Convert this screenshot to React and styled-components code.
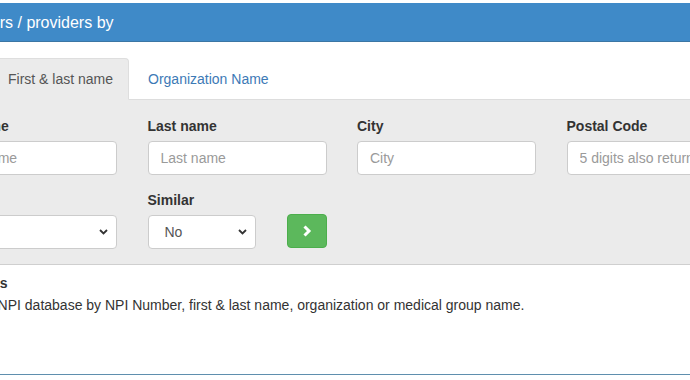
import React from "react";
import styled, { createGlobalStyle } from "styled-components";

const GlobalStyle = createGlobalStyle`
  html, body {
    margin: 0;
    padding: 0;
    background: #fff;
    overflow: hidden;
  }
  body {
    font-family: "Liberation Sans", Arial, sans-serif;
    font-size: 14px;
    color: #333;
  }
  * {
    box-sizing: border-box;
  }
`;

const Page = styled.div`
  width: 690px;
  height: 380px;
  overflow: hidden;
  padding-top: 3px;
`;

const Panel = styled.div`
  width: 900px;
  margin-left: -76px;
  border-bottom: 1px solid #5f8fae;
`;

const PanelHeading = styled.div`
  height: 39px;
  display: flex;
  align-items: center;
  padding: 2px 0 0 1px;
  background: #3f8ac8;
  border-bottom: 1px solid #3b76a4;
  color: #fff;
  font-size: 16px;
`;

const Tabs = styled.ul`
  display: flex;
  list-style: none;
  margin: 16px 0 0;
  padding: 0 0 0 68px;
  border-bottom: 1px solid #ddd;
`;

const Tab = styled.li`
  margin-bottom: -1px;
  margin-right: 2px;
  padding: 10px ${(p) => (p.$active ? "15px" : "16px")};
  line-height: 20px;
  font-size: 14px;
  border: 1px solid ${(p) => (p.$active ? "#dedede" : "transparent")};
  border-bottom-color: ${(p) => (p.$active ? "#ebebeb" : "transparent")};
  border-radius: 4px 4px 0 0;
  background: ${(p) => (p.$active ? "#ebebeb" : "transparent")};
  color: ${(p) => (p.$active ? "#555" : "#3d7ab6")};
  cursor: pointer;
`;

const FormArea = styled.div`
  background: #ebebeb;
  border-bottom: 1px solid #cfcfcf;
  padding: 16px 15px 15px 14px;
`;

const FormRow = styled.div`
  display: flex;
  gap: 30.5px;
  align-items: flex-end;
  & + & {
    margin-top: 15px;
  }
`;

const Field = styled.div`
  display: flex;
  flex-direction: column;
  width: ${(p) => p.$w || 179}px;
  flex: none;
`;

const Label = styled.label`
  font-weight: bold;
  font-size: 14px;
  line-height: 20px;
  margin-bottom: 5px;
  color: #333;
`;

const Input = styled.input`
  height: 34px;
  width: 100%;
  padding: 6px 12px;
  font: 14px "Liberation Sans", Arial, sans-serif;
  color: #555;
  background: #fff;
  border: 1px solid #ccc;
  border-radius: 4px;
  outline: none;
  &::placeholder {
    color: #9a9a9a;
  }
`;

const SelectWrap = styled.div`
  position: relative;
  width: 100%;
`;

const Select = styled.select`
  appearance: none;
  height: 34px;
  width: 100%;
  padding: 6px 12px 6px 16px;
  font: 14px "Liberation Sans", Arial, sans-serif;
  color: #555;
  background: #fff;
  border: 1px solid #ccc;
  border-radius: 4px;
  outline: none;
`;

const Caret = styled.svg`
  position: absolute;
  right: 9px;
  top: 14px;
  width: 9px;
  height: 6px;
  pointer-events: none;
`;

const GoButton = styled.button`
  width: 40px;
  height: 34px;
  margin: 0 0 1px 1px;
  display: flex;
  align-items: center;
  justify-content: center;
  background: #5cb85c;
  border: 1px solid #4cae4c;
  border-radius: 4px;
  cursor: pointer;
`;

const Info = styled.div`
  padding: 9px 15px 0 8px;
  height: 109px;
`;

const InfoTitle = styled.div`
  font-weight: bold;
  line-height: 19px;
  color: #333;
`;

const InfoText = styled.p`
  margin: 2px 0 0 -6px;
  line-height: 20px;
  color: #333;
`;

const SelectField = ({ label, children, w }) => (
  <Field $w={w}>
    <Label>{label}</Label>
    <SelectWrap>
      <Select>{children}</Select>
      <Caret viewBox="0 0 9 6">
        <path d="M1 1l3.5 3.5L8 1" fill="none" stroke="#333" strokeWidth="1.8" />
      </Caret>
    </SelectWrap>
  </Field>
);

export default function App() {
  return (
    <>
      <GlobalStyle />
      <Page>
        <Panel>
          <PanelHeading>Find doctors / providers by</PanelHeading>
          <Tabs>
            <Tab $active>First &amp; last name</Tab>
            <Tab>Organization Name</Tab>
          </Tabs>
          <FormArea>
            <FormRow>
              <Field>
                <Label>First name</Label>
                <Input placeholder="First name" />
              </Field>
              <Field>
                <Label>Last name</Label>
                <Input placeholder="Last name" />
              </Field>
              <Field>
                <Label>City</Label>
                <Input placeholder="City" />
              </Field>
              <Field>
                <Label>Postal Code</Label>
                <Input placeholder="5 digits also returns 9 digits" />
              </Field>
            </FormRow>
            <FormRow>
              <SelectField label="State">
                <option></option>
              </SelectField>
              <SelectField label="Similar" w={108}>
                <option>No</option>
                <option>Yes</option>
              </SelectField>
              <GoButton aria-label="Search">
                <svg width="10" height="12" viewBox="0 0 10 12">
                  <path d="M2.5 1.5l4.5 4.5-4.5 4.5" fill="none" stroke="#fff" strokeWidth="3" />
                </svg>
              </GoButton>
            </FormRow>
          </FormArea>
          <Info>
            <InfoTitle>Search tips</InfoTitle>
            <InfoText>
              Search the NPI database by NPI Number, first &amp; last name, organization or medical group name.
            </InfoText>
          </Info>
        </Panel>
      </Page>
    </>
  );
}
